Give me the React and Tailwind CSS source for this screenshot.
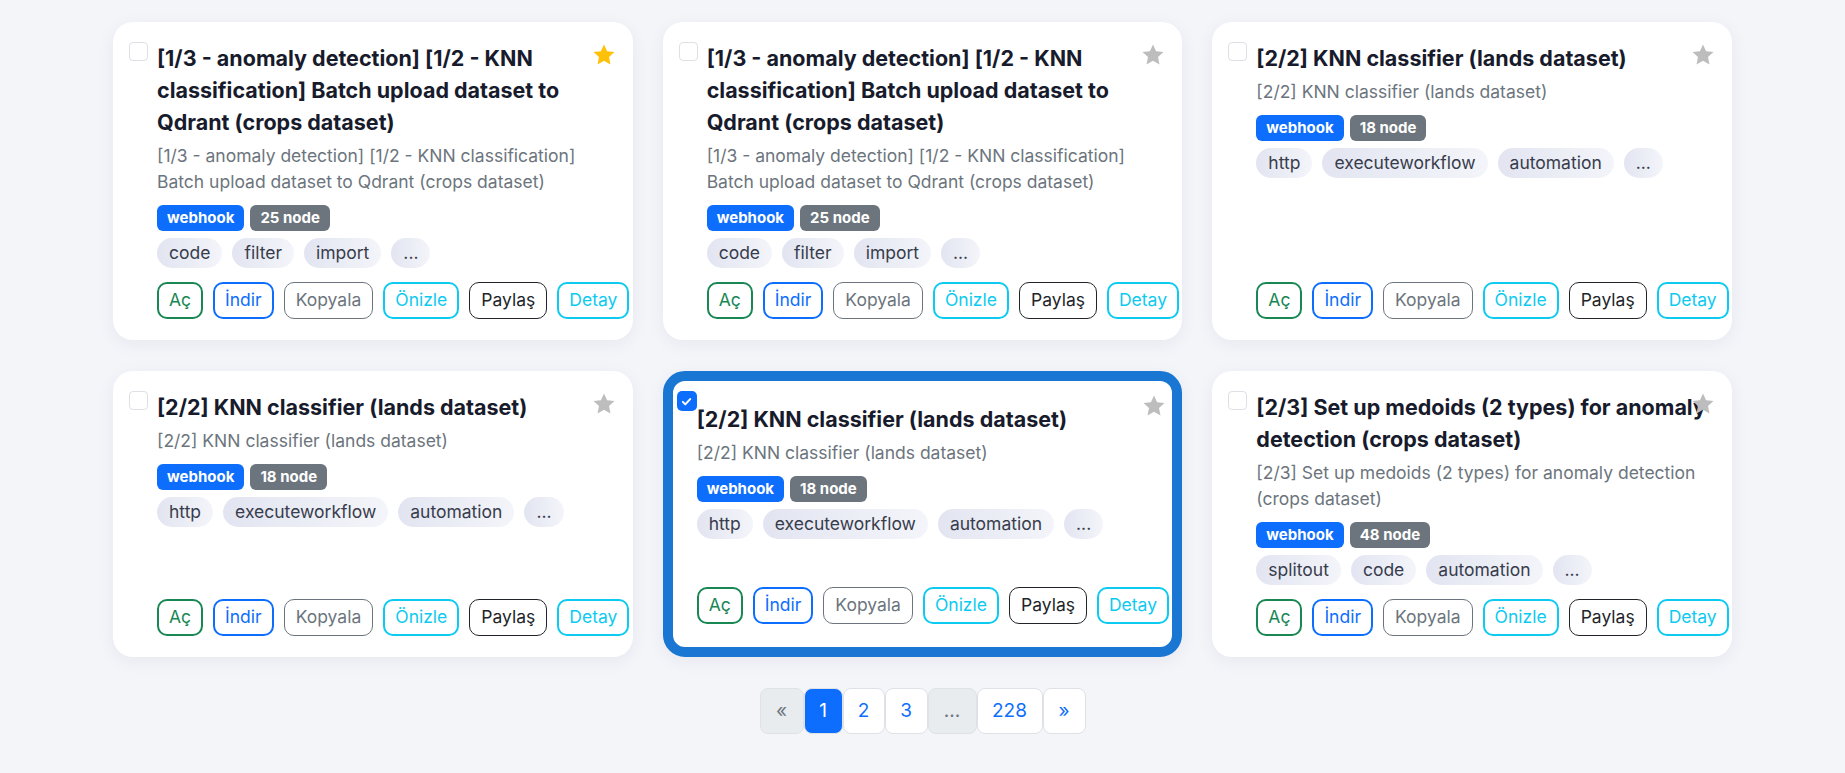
import React from "react";

const cards = [
    {
        title: "[1/3 - anomaly detection] [1/2 - KNN classification] Batch upload dataset to Qdrant (crops dataset)",
        nodes: 25,
        tags: ["code", "filter", "import"],
        starred: true,
    },
    {
        title: "[1/3 - anomaly detection] [1/2 - KNN classification] Batch upload dataset to Qdrant (crops dataset)",
        nodes: 25,
        tags: ["code", "filter", "import"],
    },
    {
        title: "[2/2] KNN classifier (lands dataset)",
        nodes: 18,
        tags: ["http", "executeworkflow", "automation"],
    },
    {
        title: "[2/2] KNN classifier (lands dataset)",
        nodes: 18,
        tags: ["http", "executeworkflow", "automation"],
    },
    {
        title: "[2/2] KNN classifier (lands dataset)",
        nodes: 18,
        tags: ["http", "executeworkflow", "automation"],
        selected: true,
    },
    {
        title: "[2/3] Set up medoids (2 types) for anomaly detection (crops dataset)",
        nodes: 48,
        tags: ["splitout", "code", "automation"],
    },
];

const actions = [
    { label: "Aç", cls: "border-2 border-[#198754] text-[#198754] px-[10px]" },
    { label: "İndir", cls: "border-2 border-[#0d6efd] text-[#0d6efd] px-[10px]" },
    { label: "Kopyala", cls: "border border-[#6c757d] text-[#6c757d] px-[11px]" },
    { label: "Önizle", cls: "border-2 border-[#0dcaf0] text-[#0dcaf0] px-[10px]" },
    { label: "Paylaş", cls: "border border-[#212529] text-[#212529] px-[11px]" },
    { label: "Detay", cls: "border-2 border-[#0dcaf0] text-[#0dcaf0] px-[10px]" },
];

const Star = ({ on }) => (
    <svg viewBox="0 0 24 24" className="w-[24px] h-[24px]">
        <polygon
            points="12,1.5 15.1,8.3 22.5,9.1 17,14.1 18.5,21.5 12,17.8 5.5,21.5 7,14.1 1.5,9.1 8.9,8.3"
            fill={on ? "#ffc107" : "#bdbdbd"}
        />
    </svg>
);

const Checkbox = ({ checked }) =>
    checked ? (
        <div className="w-[20px] h-[20px] rounded-[5px] bg-[#0d6efd] flex items-center justify-center">
            <svg viewBox="0 0 16 16" className="w-[13px] h-[13px]">
                <path d="M3.5 8.5l3 3 6-6.5" fill="none" stroke="#fff" strokeWidth="2.4" strokeLinecap="round" strokeLinejoin="round" />
            </svg>
        </div>
    ) : (
        <div className="w-[19px] h-[19px] rounded-[4px] border border-[#dde0e5] bg-white" />
    );

const Card = ({ title, nodes, tags, starred, selected }) => (
    <div
        className={
            "relative flex flex-col bg-white shadow-[0_4px_18px_rgba(30,40,90,0.06)] " +
            (selected
                ? "rounded-[22px] border-[10px] border-[#1976d2] pl-[24px] pr-[6px] pt-[22px] pb-[23px]"
                : "rounded-[20px] pl-[44px] pr-[16px] pt-[20px] pb-[21px]")
        }
    >
        <div className={selected ? "absolute left-[4px] top-[10px]" : "absolute left-[16px] top-[20px]"}>
            <Checkbox checked={selected} />
        </div>
        <div className={selected ? "absolute right-[6px] top-[13px]" : "absolute right-[17px] top-[21px]"}>
            <Star on={starred} />
        </div>
        <h3 className="text-[21.5px] leading-[32px] font-bold text-[#171b2c]">{title}</h3>
        <p className="mt-[5px] text-[17.5px] leading-[26px] text-[#6c757d]">{title}</p>
        <div className="mt-[10px] flex gap-[6px]">
            <span className="h-[26px] px-[10px] rounded-[6px] bg-[#0d6efd] text-white text-[15px] font-bold flex items-center">webhook</span>
            <span className="h-[26px] px-[10px] rounded-[6px] bg-[#6c757d] text-white text-[15px] font-bold flex items-center">{nodes} node</span>
        </div>
        <div className="mt-[7px] flex gap-[10px]">
            {[...tags, "..."].map((t) => (
                <span
                    key={t}
                    className="h-[30px] px-[12px] rounded-full bg-linear-to-r from-[#e2e5f1] to-[#f4f5fa] text-[17.5px] text-[#383c4c] flex items-center"
                >
                    {t}
                </span>
            ))}
        </div>
        <div className="mt-auto pt-[14px] flex gap-[10px] flex-nowrap">
            {actions.map((a) => (
                <button key={a.label} className={"h-[37px] rounded-[10px] text-[17.5px] bg-white whitespace-nowrap " + a.cls}>
                    {a.label}
                </button>
            ))}
        </div>
    </div>
);

const pages = [
    { label: "«", w: "w-[44px]", cls: "bg-[#e9ecef] text-[#6c757d]" },
    { label: "1", w: "w-[39px]", cls: "bg-[#0d6efd] text-white border-[#0d6efd]" },
    { label: "2", w: "w-[42px]", cls: "bg-white text-[#0d6efd]" },
    { label: "3", w: "w-[43px]", cls: "bg-white text-[#0d6efd]" },
    { label: "...", w: "w-[49px]", cls: "bg-[#e9ecef] text-[#6c757d]" },
    { label: "228", w: "w-[66px]", cls: "bg-white text-[#0d6efd]" },
    { label: "»", w: "w-[43px]", cls: "bg-white text-[#0d6efd]" },
];

export default function App() {
    return (
        <div className="min-h-screen bg-[#f3f5f9] pt-[22px] pb-[40px] font-['Inter',sans-serif]">
            <div className="mx-auto w-[1619px] grid grid-cols-3 gap-x-[30px] gap-y-[31px]">
                {cards.map((c, i) => (
                    <Card key={i} {...c} />
                ))}
            </div>
            <nav className="mt-[31px] flex justify-center">
                {pages.map((p) => (
                    <span
                        key={p.label}
                        className={"h-[46px] flex items-center justify-center rounded-[8px] border border-[#dee2e6] text-[19px] " + p.w + " " + p.cls}
                    >
                        {p.label}
                    </span>
                ))}
            </nav>
        </div>
    );
}
